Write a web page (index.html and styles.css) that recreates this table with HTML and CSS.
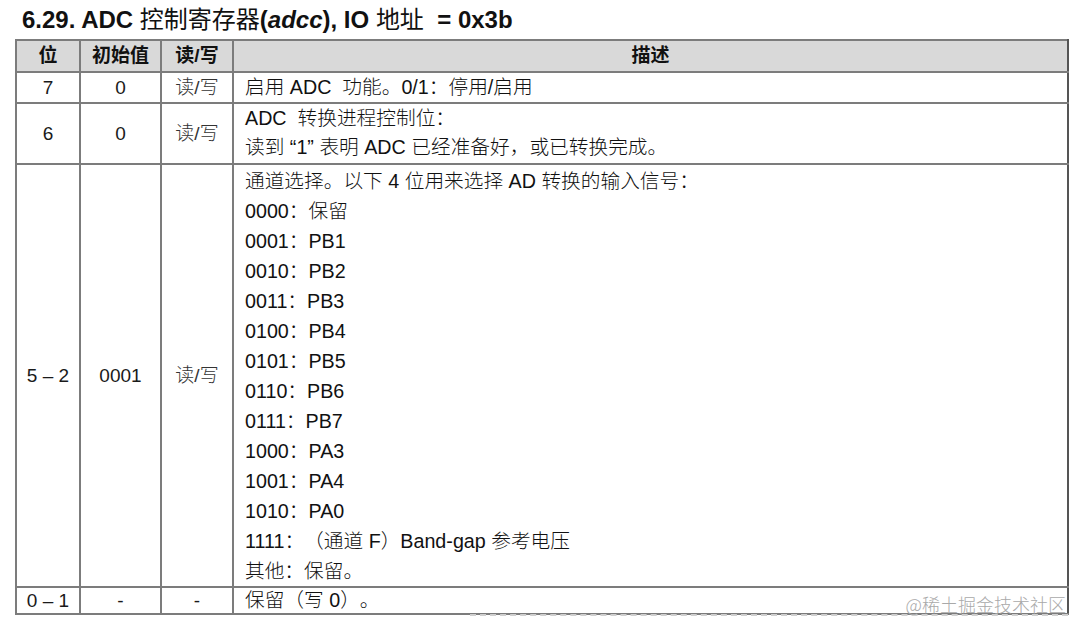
FILE: index.html
```html
<!DOCTYPE html>
<html lang="zh-CN">
<head>
<meta charset="utf-8">
<title>ADC 控制寄存器</title>
<link rel="stylesheet" href="styles.css">
</head>
<body>
<div class="page">
  <h1 class="title">6.29. ADC <span class="t-cjk">控制寄存器</span>(<em>adcc</em>), IO <span class="t-cjk">地址</span> &nbsp;= 0x3b</h1>
  <table class="reg">
    <colgroup>
      <col class="c-bit"><col class="c-init"><col class="c-rw"><col class="c-desc">
    </colgroup>
    <thead>
      <tr><th>位</th><th>初始值</th><th>读/写</th><th>描述</th></tr>
    </thead>
    <tbody>
      <tr class="r1">
        <td class="ctr">7</td><td class="ctr">0</td><td class="ctr cjk">读/写</td>
        <td class="desc">启用 ADC &nbsp;功能。0/1：停用/启用</td>
      </tr>
      <tr class="r2">
        <td class="ctr">6</td><td class="ctr">0</td><td class="ctr cjk">读/写</td>
        <td class="desc">ADC &nbsp;转换进程控制位：<br>读到 “1” 表明 ADC 已经准备好，或已转换完成。</td>
      </tr>
      <tr class="r3">
        <td class="ctr">5 – 2</td><td class="ctr">0001</td><td class="ctr cjk">读/写</td>
        <td class="desc">通道选择。以下 4 位用来选择 AD 转换的输入信号：<br>0000：保留<br>0001：PB1<br>0010：PB2<br>0011：PB3<br>0100：PB4<br>0101：PB5<br>0110：PB6<br>0111：PB7<br>1000：PA3<br>1001：PA4<br>1010：PA0<br>1111：（通道 F）Band-gap 参考电压<br>其他：保留。</td>
      </tr>
      <tr class="r4">
        <td class="ctr">0 – 1</td><td class="ctr">-</td><td class="ctr">-</td>
        <td class="desc">保留（写 0）。</td>
      </tr>
    </tbody>
  </table>
  <div class="scanline"></div>
  <div class="watermark">@稀土掘金技术社区</div>
</div>
</body>
</html>
```
FILE: styles.css
```css
html, body {
  margin: 0;
  padding: 0;
  background: #ffffff;
}
body {
  font-family: "Liberation Sans", "Noto Sans CJK SC", sans-serif;
  color: #1a1a1a;
  text-spacing-trim: space-all;
}
.page {
  position: relative;
  width: 1084px;
  height: 633px;
  overflow: hidden;
}
.title {
  margin: 6px 0 5px 22px;
  font-size: 24px;
  line-height: 28px;
  font-weight: bold;
  color: #111;
  white-space: nowrap;
}
.title em {
  font-style: italic;
}
.t-cjk {
  font-weight: normal;
}
.reg {
  margin-left: 15px;
  width: 1054px;
  border-collapse: collapse;
  table-layout: fixed;
  font-size: 19px;
  border-right: 2px solid #555;
}
.c-bit { width: 64px; }
.c-init { width: 81px; }
.c-rw { width: 72px; }
.reg th, .reg td {
  border: 2px solid #7c7c7c;
  padding: 0;
  vertical-align: middle;
}
.reg th:last-child, .reg td:last-child {
  border-right-color: #555;
}
.reg th {
  background: #d9d9d9;
  font-weight: bold;
  font-size: 19px;
  line-height: 30px;
  text-align: center;
  color: #111;
}
.ctr {
  text-align: center;
}
.cjk {
  font-weight: 300;
  color: #333;
}
.desc {
  padding-left: 11px !important;
  text-align: left;
  white-space: nowrap;
  font-weight: 300;
  font-size: 19.7px;
  color: #111;
}
.r1 td { line-height: 29px; }
.r2 td { line-height: 29px; padding: 0 0 1px 0; }
.r3 td { line-height: 30px; padding: 1px 0 0 0; }
.r4 td { line-height: 25px; }
.scanline {
  position: absolute;
  left: 470px;
  top: 614px;
  width: 598px;
  border-top: 2px dashed #cfcfcf;
}
.watermark {
  position: absolute;
  right: 18px;
  top: 591px;
  font-size: 18px;
  line-height: 26px;
  color: #a9a9a9;
  font-family: "Noto Sans CJK SC", sans-serif;
  font-weight: 300;
}
```
